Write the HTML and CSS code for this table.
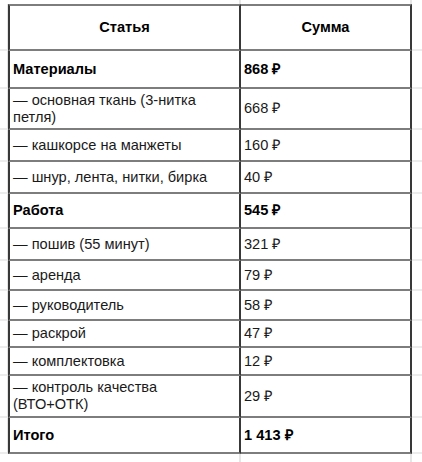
FILE: index.html
```html
<!DOCTYPE html>
<html lang="ru">
<head>
<meta charset="utf-8">
<link rel="stylesheet" href="styles.css">
</head>
<body>
<div class="sheet">
  <div class="g top"></div><div class="g top v"></div><div class="g top v"></div><div class="g top"></div>

  <div class="g side"></div><div class="c c1 head b">Статья</div><div class="c c2 head b">Сумма</div><div class="g side r"></div>

  <div class="g side"></div><div class="c c1 b">Материалы</div><div class="c c2 b">868 ₽</div><div class="g side r"></div>
  <div class="g side"></div><div class="c c1">— основная ткань (3-нитка<br>петля)</div><div class="c c2">668 ₽</div><div class="g side r"></div>
  <div class="g side"></div><div class="c c1">— кашкорсе на манжеты</div><div class="c c2">160 ₽</div><div class="g side r"></div>
  <div class="g side"></div><div class="c c1">— шнур, лента, нитки, бирка</div><div class="c c2">40 ₽</div><div class="g side r"></div>

  <div class="g side"></div><div class="c c1 b">Работа</div><div class="c c2 b">545 ₽</div><div class="g side r"></div>
  <div class="g side"></div><div class="c c1">— пошив (55 минут)</div><div class="c c2">321 ₽</div><div class="g side r"></div>
  <div class="g side"></div><div class="c c1">— аренда</div><div class="c c2">79 ₽</div><div class="g side r"></div>
  <div class="g side"></div><div class="c c1">— руководитель</div><div class="c c2">58 ₽</div><div class="g side r"></div>
  <div class="g side"></div><div class="c c1">— раскрой</div><div class="c c2">47 ₽</div><div class="g side r"></div>
  <div class="g side"></div><div class="c c1">— комплектовка</div><div class="c c2">12 ₽</div><div class="g side r"></div>
  <div class="g side"></div><div class="c c1">— контроль качества<br>(ВТО+ОТК)</div><div class="c c2">29 ₽</div><div class="g side r"></div>

  <div class="g side"></div><div class="c c1 b">Итого</div><div class="c c2 b">1 413 ₽</div><div class="g side r"></div>

  <div class="g bot"></div><div class="g bot v"></div><div class="g bot v"></div><div class="g bot"></div>
</div>
</body>
</html>
```

FILE: styles.css
```css
html, body {
  margin: 0;
  padding: 0;
  background: #fff;
}

body {
  width: 422px;
  height: 462px;
  overflow: hidden;
  font-family: "Liberation Sans", Arial, sans-serif;
  font-size: 14.6px;
  color: #1a1a1a;
}

.sheet {
  display: grid;
  grid-template-columns: 8px 233px 171px 10px;
  grid-template-rows: 4px 47px 38px 41px 32px 32px 35px 32px 30px 30px 27px 28px 42px 36px 8px;
  width: 422px;
  height: 462px;
}

.g {
  box-sizing: border-box;
}

.g.side {
  border-bottom: 2px solid #ececec;
  border-right: 1px solid #e4e4e4;
}

.g.side.r {
  border-right: none;
}

.g.v {
  border-right: 2px solid #e6e6e6;
}

.c {
  box-sizing: border-box;
  display: flex;
  align-items: center;
  padding: 0 4px 0 3px;
  line-height: 17px;
  border-bottom: 2px solid #7d7d7d;
  border-right: 2px solid #383838;
}

.c1 {
  border-left: 2px solid #383838;
}

.head {
  border-top: 2px solid #7d7d7d;
  justify-content: center;
  padding-left: 0;
  padding-right: 0;
}

.b {
  font-weight: bold;
  color: #000;
}
```
